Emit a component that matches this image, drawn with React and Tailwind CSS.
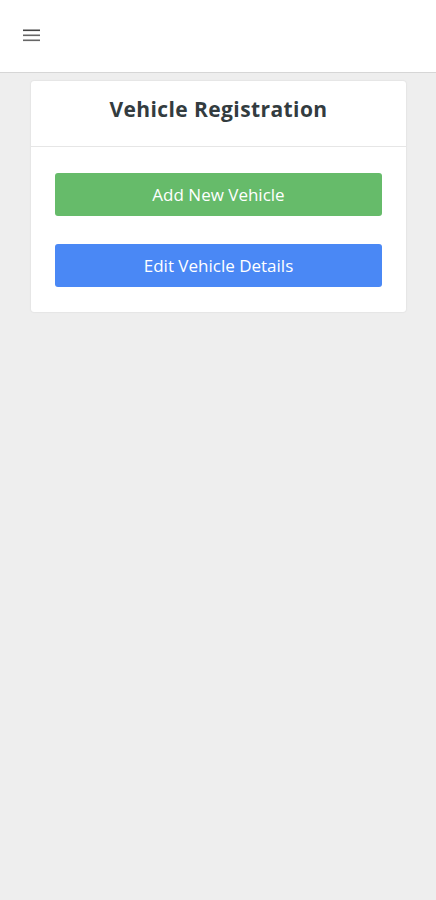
export default function App() {
  return (
    <div className="min-h-[900px] bg-[#eeeeee]" style={{ fontFamily: "'Open Sans', Lato, sans-serif" }}>
      <header className="h-[73px] bg-white border-b border-[#d6d6d6] flex items-center pl-[23px]">
        <svg width="17" height="13" viewBox="0 0 17 13" className="mt-[-1px]">
          <rect x="0" y="0.5" width="17" height="1.6" fill="#444" />
          <rect x="0" y="5.5" width="17" height="1.6" fill="#666" />
          <rect x="0" y="10.5" width="17" height="1.6" fill="#666" />
        </svg>
      </header>
      <div className="pt-[8px] px-[31px]">
        <div className="w-[375px] bg-white rounded-[3px] shadow-[0_0_2px_rgba(0,0,0,0.12)]">
          <div className="h-[66px] flex items-center justify-center border-b border-[#e6e6e6]">
            <h1 className="text-[21px] font-bold text-[#333c3f] tracking-[0.4px] mt-[-8px]">Vehicle Registration</h1>
          </div>
          <div className="px-[24px] pt-[26px] pb-[25px] flex flex-col gap-[28px]">
            <button className="h-[43px] w-full rounded-[3px] bg-[#66bb6a] text-white text-[17px] font-medium">Add New Vehicle</button>
            <button className="h-[43px] w-full rounded-[3px] bg-[#4a88f5] text-white text-[17px] font-medium">Edit Vehicle Details</button>
          </div>
        </div>
      </div>
    </div>
  );
}
